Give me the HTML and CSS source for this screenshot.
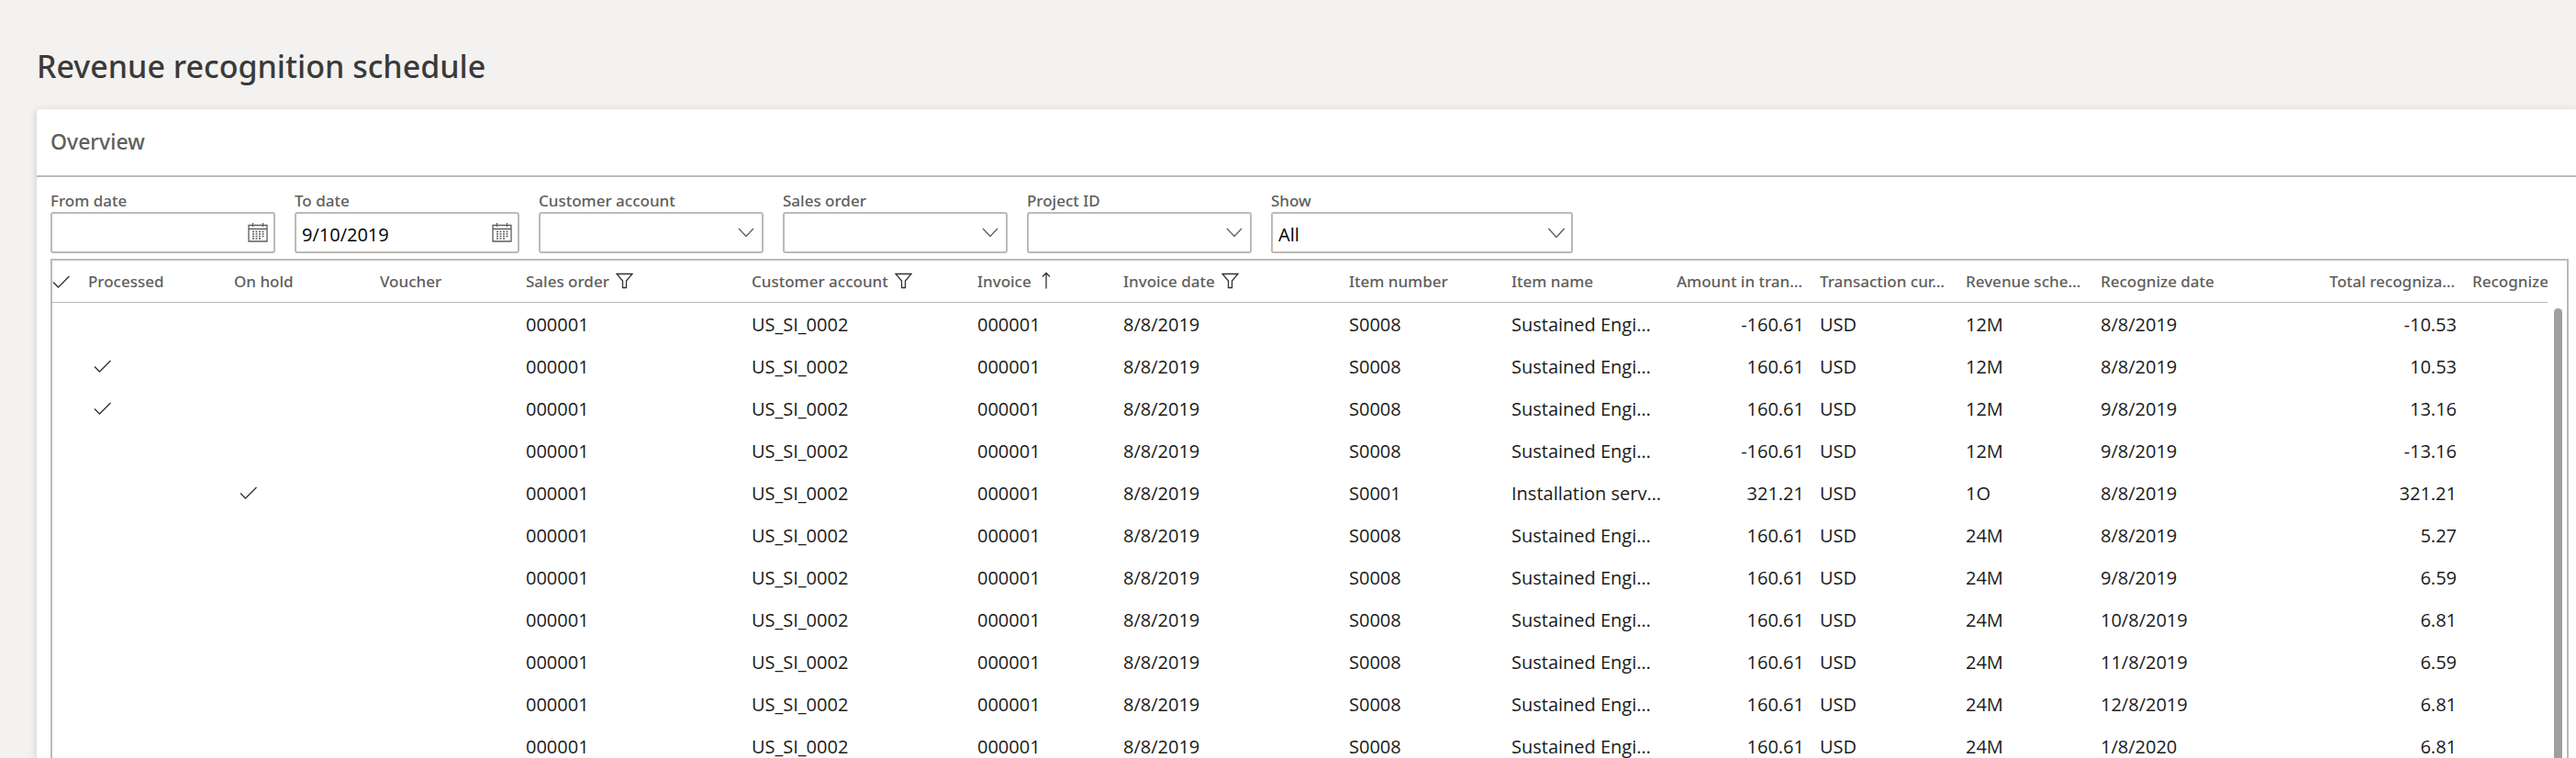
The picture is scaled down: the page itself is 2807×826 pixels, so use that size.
FILE: index.html
```
<!DOCTYPE html>
<html lang="en">
<head>
  <meta charset="UTF-8">
  <meta name="viewport" content="width=device-width, initial-scale=1.0">
  <title>Revenue recognition schedule</title>
  <link rel="stylesheet" href="styles.css">
</head>
<body>

  <!-- Shared icons -->
  <svg class="icon-defs" aria-hidden="true">
    <symbol id="icon-check" viewBox="0 0 20 16"><path d="M1 8.5 6.5 14 18.5 2"/></symbol>
    <symbol id="icon-chevron" viewBox="0 0 18 11"><path d="M1 1 9 9.5 17 1"/></symbol>
    <symbol id="icon-filter" viewBox="0 0 19 18"><path d="M1 1.5H18L11.5 9V16.5H7.5V9Z"/></symbol>
    <symbol id="icon-sort" viewBox="0 0 10 19"><path d="M5 18.5V1.5M1 5.5 5 1.5 9 5.5"/></symbol>
    <symbol id="icon-calendar" viewBox="0 0 22 21">
      <path d="M1 2.5H21V20H1ZM1 6.5H21M5.5 0V4M16.5 0V4"/>
      <path class="dots" d="M5 9.5H18M5 12H18M5 14.5H18M5 17H15"/>
    </symbol>
  </svg>

  <h1>Revenue recognition schedule</h1>

  <main class="card">
    <h2>Overview</h2>

    <form class="filters">
      <div class="field">
        <label for="from-date">From date</label>
        <div class="control">
          <input type="text" id="from-date">
          <button type="button" aria-label="Pick from date"><svg class="calendar"><use href="#icon-calendar"/></svg></button>
        </div>
      </div>
      <div class="field">
        <label for="to-date">To date</label>
        <div class="control">
          <input type="text" id="to-date" value="9/10/2019">
          <button type="button" aria-label="Pick to date"><svg class="calendar"><use href="#icon-calendar"/></svg></button>
        </div>
      </div>
      <div class="field">
        <label for="customer-account">Customer account</label>
        <div class="control">
          <input type="text" id="customer-account">
          <button type="button" aria-label="Open customer accounts"><svg class="chevron"><use href="#icon-chevron"/></svg></button>
        </div>
      </div>
      <div class="field">
        <label for="sales-order">Sales order</label>
        <div class="control">
          <input type="text" id="sales-order">
          <button type="button" aria-label="Open sales orders"><svg class="chevron"><use href="#icon-chevron"/></svg></button>
        </div>
      </div>
      <div class="field">
        <label for="project-id">Project ID</label>
        <div class="control">
          <input type="text" id="project-id">
          <button type="button" aria-label="Open projects"><svg class="chevron"><use href="#icon-chevron"/></svg></button>
        </div>
      </div>
      <div class="field field-wide">
        <label for="show">Show</label>
        <div class="control">
          <select id="show">
            <option>All</option>
            <option>Processed</option>
            <option>On hold</option>
          </select>
          <svg class="chevron select-arrow"><use href="#icon-chevron"/></svg>
        </div>
      </div>
    </form>

    <div class="grid">
      <div class="grid-view">
        <table>
          <colgroup>
            <col class="w-check">
            <col class="w-md">
            <col class="w-md">
            <col class="w-md">
            <col class="w-xl">
            <col class="w-xl">
            <col class="w-md">
            <col class="w-xl">
            <col class="w-lg">
            <col class="w-lg">
            <col class="w-md">
            <col class="w-md">
            <col class="w-sm">
            <col class="w-xl">
            <col class="w-md">
            <col>
          </colgroup>
          <thead>
            <tr>
              <th class="select-all"><svg class="check"><use href="#icon-check"/></svg></th>
              <th>Processed</th>
              <th>On hold</th>
              <th>Voucher</th>
              <th>Sales order<svg class="filter"><use href="#icon-filter"/></svg></th>
              <th>Customer account<svg class="filter"><use href="#icon-filter"/></svg></th>
              <th>Invoice<svg class="sort"><use href="#icon-sort"/></svg></th>
              <th>Invoice date<svg class="filter"><use href="#icon-filter"/></svg></th>
              <th>Item number</th>
              <th>Item name</th>
              <th class="num">Amount in tran…</th>
              <th>Transaction cur…</th>
              <th>Revenue sche…</th>
              <th>Recognize date</th>
              <th class="num">Total recogniza…</th>
              <th>Recognize</th>
            </tr>
          </thead>
          <tbody id="schedule-rows"></tbody>
        </table>
      </div>
      <div class="scrollbar"><div class="thumb"></div></div>
    </div>
  </main>

  <script>
    // mark, item, item name, amount, schedule, recognize date, total
    const lines = [
      ['', 'S0008', 'Sustained Engi…', '-160.61', '12M', '8/8/2019', '-10.53'],
      ['processed', 'S0008', 'Sustained Engi…', '160.61', '12M', '8/8/2019', '10.53'],
      ['processed', 'S0008', 'Sustained Engi…', '160.61', '12M', '9/8/2019', '13.16'],
      ['', 'S0008', 'Sustained Engi…', '-160.61', '12M', '9/8/2019', '-13.16'],
      ['hold', 'S0001', 'Installation serv…', '321.21', '1O', '8/8/2019', '321.21'],
      ['', 'S0008', 'Sustained Engi…', '160.61', '24M', '8/8/2019', '5.27'],
      ['', 'S0008', 'Sustained Engi…', '160.61', '24M', '9/8/2019', '6.59'],
      ['', 'S0008', 'Sustained Engi…', '160.61', '24M', '10/8/2019', '6.81'],
      ['', 'S0008', 'Sustained Engi…', '160.61', '24M', '11/8/2019', '6.59'],
      ['', 'S0008', 'Sustained Engi…', '160.61', '24M', '12/8/2019', '6.81'],
      ['', 'S0008', 'Sustained Engi…', '160.61', '24M', '1/8/2020', '6.81']
    ];

    const check = '<svg class="check"><use href="#icon-check"/></svg>';
    const body = document.getElementById('schedule-rows');

    lines.forEach(([mark, item, name, amount, schedule, date, total]) => {
      const row = document.createElement('tr');

      row.innerHTML = `
        <td></td>
        <td class="mark">${mark === 'processed' ? check : ''}</td>
        <td class="mark">${mark === 'hold' ? check : ''}</td>
        <td></td>
        <td>000001</td>
        <td>US_SI_0002</td>
        <td>000001</td>
        <td>8/8/2019</td>
        <td>${item}</td>
        <td>${name}</td>
        <td class="num">${amount}</td>
        <td>USD</td>
        <td>${schedule}</td>
        <td>${date}</td>
        <td class="num">${total}</td>
        <td></td>
      `;

      body.appendChild(row);
    });
  </script>

</body>
</html>
```
FILE: styles.css
```
* {
  box-sizing: border-box;
}

body {
  display: flex;
  flex-direction: column;
  height: 100vh;
  margin: 0;
  overflow: hidden;
  background: #f3f2f0;
  color: #1b1a19;
  font-family: "Open Sans", "Noto Sans", sans-serif;
  font-size: 20px;
}

svg {
  fill: none;
  stroke: #323130;
  stroke-width: 1.3;
}

.icon-defs {
  position: absolute;
  width: 0;
  height: 0;
}

h1 {
  margin: 0;
  padding: 48px 40px 23px;
  color: #3b3a39;
  font-family: "Noto Sans", sans-serif;
  font-size: 34px;
  font-weight: 500;
  line-height: 48px;
}

.card {
  display: flex;
  flex: 1;
  flex-direction: column;
  min-height: 0;
  margin-left: 40px;
  background: #fff;
  border-top-left-radius: 4px;
  box-shadow: 0 2px 8px rgba(0, 0, 0, 0.18);
}

h2 {
  margin: 0;
  padding: 0 15px 2px;
  border-bottom: 2px solid #bdb9b6;
  color: #605e5c;
  font-family: "Noto Sans", sans-serif;
  font-size: 23px;
  font-weight: 500;
  line-height: 70px;
}

.filters {
  display: flex;
  gap: 21px;
  padding: 14px 15px 6px;
}

.field {
  width: 245px;
}

.field-wide {
  width: 329px;
}

.field label {
  display: block;
  color: #605e5c;
  font-family: "Noto Sans", sans-serif;
  font-size: 17px;
  font-weight: 500;
  line-height: 24px;
}

.control {
  display: flex;
  align-items: center;
  height: 45px;
  border: 2px solid #bdb9b6;
  border-radius: 3px;
}

.control input,
.control select {
  flex: 1;
  min-width: 0;
  height: 100%;
  padding: 3px 6px 0;
  border: 0;
  background: transparent;
  appearance: none;
  color: #000;
  font: inherit;
}

.control button {
  display: flex;
  padding: 0 6px;
  border: 0;
  background: none;
}

.calendar {
  width: 22px;
  height: 21px;
}

.calendar,
.chevron {
  stroke: #605e5c;
}

.dots {
  stroke-dasharray: 2 1.5;
}

.chevron {
  width: 18px;
  height: 11px;
}

.control button .chevron {
  margin-right: 2px;
}

.select-arrow {
  width: 20px;
  height: 12px;
  margin-right: 6px;
  pointer-events: none;
}

.grid {
  display: flex;
  flex: 1;
  min-height: 0;
  margin: 0 8px 0 15px;
  border: 2px solid #bdb9b6;
  border-bottom: 0;
}

.grid-view {
  flex: 1;
  min-width: 0;
  overflow: hidden;
}

table {
  width: 100%;
  border-spacing: 0;
  table-layout: fixed;
}

.w-check { width: 29px; }
.w-sm { width: 147px; }
.w-md { width: 159px; }
.w-lg { width: 177px; }
.w-xl { width: 246px; }

th,
td {
  height: 46px;
  padding: 0 7px 0 10px;
  overflow: hidden;
  text-align: left;
  white-space: nowrap;
}

th {
  padding-right: 9px;
  padding-bottom: 1px;
  border-bottom: 1px solid #bdb9b6;
  color: #605e5c;
  font-family: "Noto Sans", sans-serif;
  font-size: 17px;
  font-weight: 500;
}

.num {
  text-align: right;
}

.check {
  display: block;
  width: 20px;
  height: 16px;
}

.select-all {
  padding: 0;
}

.mark {
  padding-left: 16px;
}

.filter {
  width: 19px;
  height: 18px;
  margin-left: 7px;
  vertical-align: -2px;
}

.sort {
  width: 10px;
  height: 19px;
  margin-left: 11px;
  vertical-align: -2px;
}

.scrollbar {
  display: flex;
  width: 21px;
  padding: 52px 5px 0 7px;
}

.thumb {
  flex: 1;
  border-radius: 5px 5px 0 0;
  background: #a19f9d;
}
```
